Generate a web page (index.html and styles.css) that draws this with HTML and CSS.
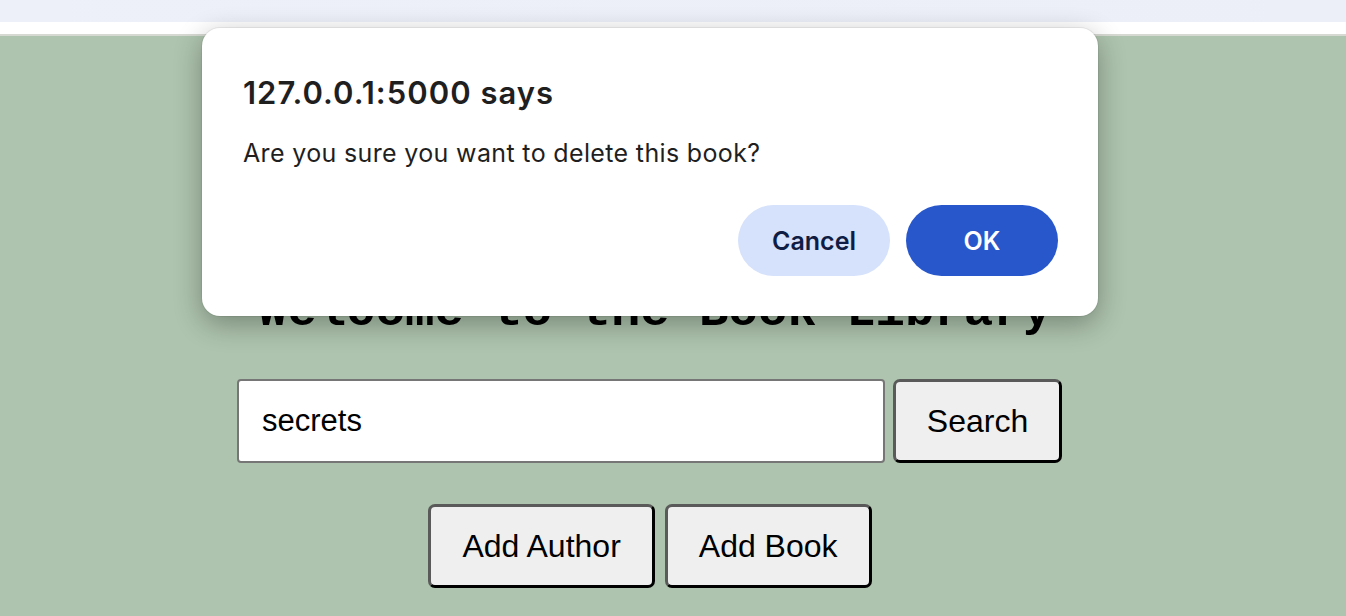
FILE: index.html
```html
<!DOCTYPE html>
<html lang="en">
<head>
<meta charset="utf-8">
<title>Book Library</title>
<link rel="stylesheet" href="styles.css">
</head>
<body>
<div class="tabstrip"></div>
<div class="toolbar"></div>
<main class="page">
  <div class="content">
    <h1 class="title">Welcome to the Book Library</h1>
    <form class="search-row">
      <input class="search-input" type="text" value="secrets">
      <button class="btn btn-search" type="button">Search</button>
    </form>
    <div class="action-row">
      <button class="btn" type="button">Add Author</button>
      <button class="btn" type="button">Add Book</button>
    </div>
  </div>
</main>
<div class="dialog" role="alertdialog">
  <div class="dialog-title">127.0.0.1:5000 says</div>
  <div class="dialog-msg">Are you sure you want to delete this book?</div>
  <div class="dialog-actions">
    <button class="dbtn dbtn-cancel" type="button">Cancel</button>
    <button class="dbtn dbtn-ok" type="button">OK</button>
  </div>
</div>
</body>
</html>
```
FILE: styles.css
```css
* { box-sizing: border-box; }
html, body { margin: 0; padding: 0; }
body {
  width: 1346px;
  height: 616px;
  overflow: hidden;
  background: #aec4ae;
  font-family: "Liberation Sans", Arial, sans-serif;
}
.tabstrip {
  height: 22px;
  background: linear-gradient(to right, #edf0f8, #eceff7);
}
.toolbar {
  height: 14px;
  background: #ffffff;
  border-bottom: 2px solid #d6d9d2;
}
.page {
  background: #aec4ae;
  height: 580px;
}
.content {
  width: 1300px;
  display: flex;
  flex-direction: column;
  align-items: center;
}
.title {
  margin: 248px 0 0 10px;
  font-family: "Liberation Mono", "Courier New", monospace;
  font-weight: bold;
  font-size: 49px;
  line-height: 56px;
  color: #000;
}
.search-row {
  margin-top: 39px;
  margin-right: 1px;
  display: flex;
  gap: 8px;
}
.search-input {
  width: 648px;
  height: 84px;
  border: 2px solid #767676;
  border-radius: 4px;
  padding: 0 23px;
  font-family: "Liberation Sans", Arial, sans-serif;
  font-size: 31px;
  color: #000;
  background: #fff;
  outline: none;
}
.btn {
  height: 84px;
  padding: 0 31px;
  background: #efefef;
  border: 3px solid;
  border-color: #5a5a5a #000 #000 #5a5a5a;
  border-radius: 7px;
  font-family: "Liberation Sans", Arial, sans-serif;
  font-size: 32px;
  color: #000;
}
.btn-search { width: 169px; padding: 0; }
.action-row {
  margin-top: 41px;
  display: flex;
  gap: 10px;
}
.dialog {
  position: absolute;
  top: 28px;
  left: 202px;
  width: 896px;
  height: 288px;
  background: #fff;
  border-radius: 18px;
  box-shadow: 0 8px 28px rgba(0, 0, 0, 0.32), 0 0 0 1px rgba(0, 0, 0, 0.06);
  padding: 47px 40px 40px 41px;
  display: flex;
  flex-direction: column;
  font-family: Inter, "Noto Sans", sans-serif;
  color: #1f1f1f;
}
.dialog-title {
  font-size: 31px;
  font-weight: 600;
  line-height: 36px;
  letter-spacing: 1px;
}
.dialog-msg {
  margin-top: 27px;
  font-size: 25px;
  line-height: 30px;
  letter-spacing: 0.35px;
}
.dialog-actions {
  margin-top: auto;
  display: flex;
  justify-content: flex-end;
  gap: 16px;
}
.dbtn {
  width: 152px;
  height: 71px;
  border: none;
  border-radius: 36px;
  font-family: Inter, "Noto Sans", sans-serif;
  font-size: 25px;
  font-weight: 560;
}
.dbtn-cancel {
  background: #d6e2fb;
  color: #0f1d45;
}
.dbtn-ok {
  background: #2857cc;
  color: #fff;
}
```
